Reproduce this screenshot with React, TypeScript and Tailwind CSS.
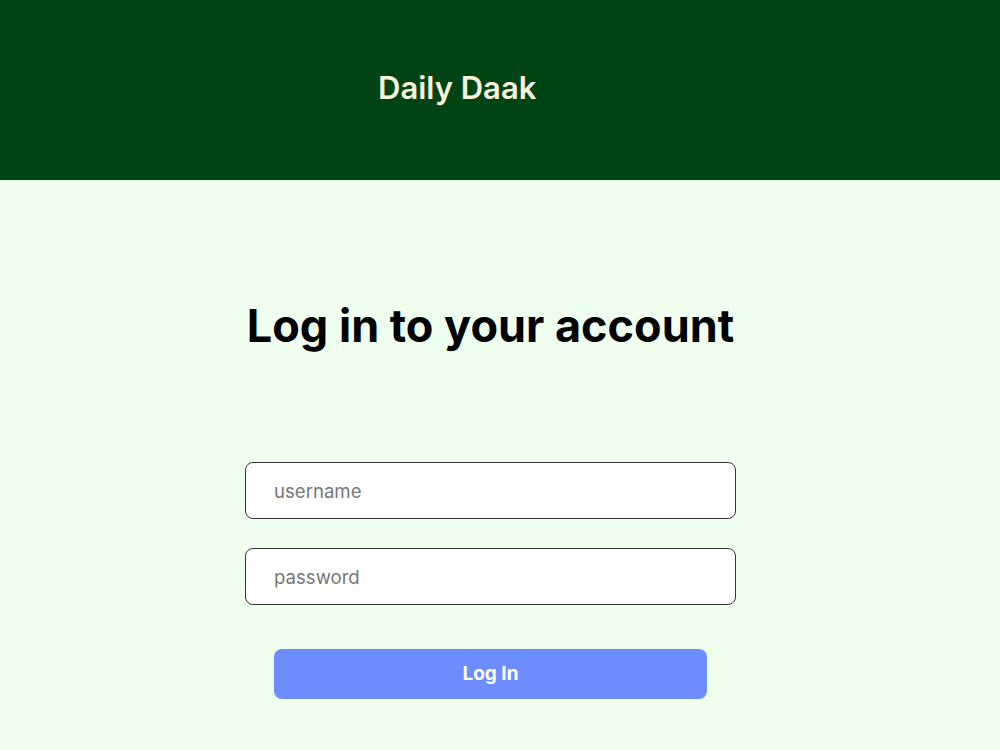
export default function App() {
  return (
    <div className="min-h-[750px] bg-[#efffee]" style={{ fontFamily: "Inter, 'Noto Sans', sans-serif" }}>
      <header className="h-[180px] bg-[#004414] flex items-center pl-[378px]">
        <h1 className="text-[31px] font-semibold text-[#f7f3dc] -mt-[4px]">Daily Daak</h1>
      </header>

      <main className="ml-[245px] w-[491px] flex flex-col items-center">
        <h2 className="mt-[120px] text-[45px] leading-[52px] font-bold text-black">Log in to your account</h2>

        <form className="mt-[110px] w-full flex flex-col gap-[29px]">
          <input
            type="text"
            placeholder="username"
            className="h-[57px] w-full rounded-lg border border-[#333] bg-white px-[28px] text-[18.6px] text-gray-800 placeholder:text-[#777] outline-none"
          />
          <input
            type="password"
            placeholder="password"
            className="h-[57px] w-full rounded-lg border border-[#333] bg-white px-[28px] text-[18.6px] text-gray-800 placeholder:text-[#777] outline-none"
          />
        </form>

        <button
          type="button"
          className="mt-[44px] h-[50px] w-[433px] rounded-lg bg-[#6c8cff] text-[19px] font-bold text-white"
        >
          Log In
        </button>
      </main>
    </div>
  );
}
